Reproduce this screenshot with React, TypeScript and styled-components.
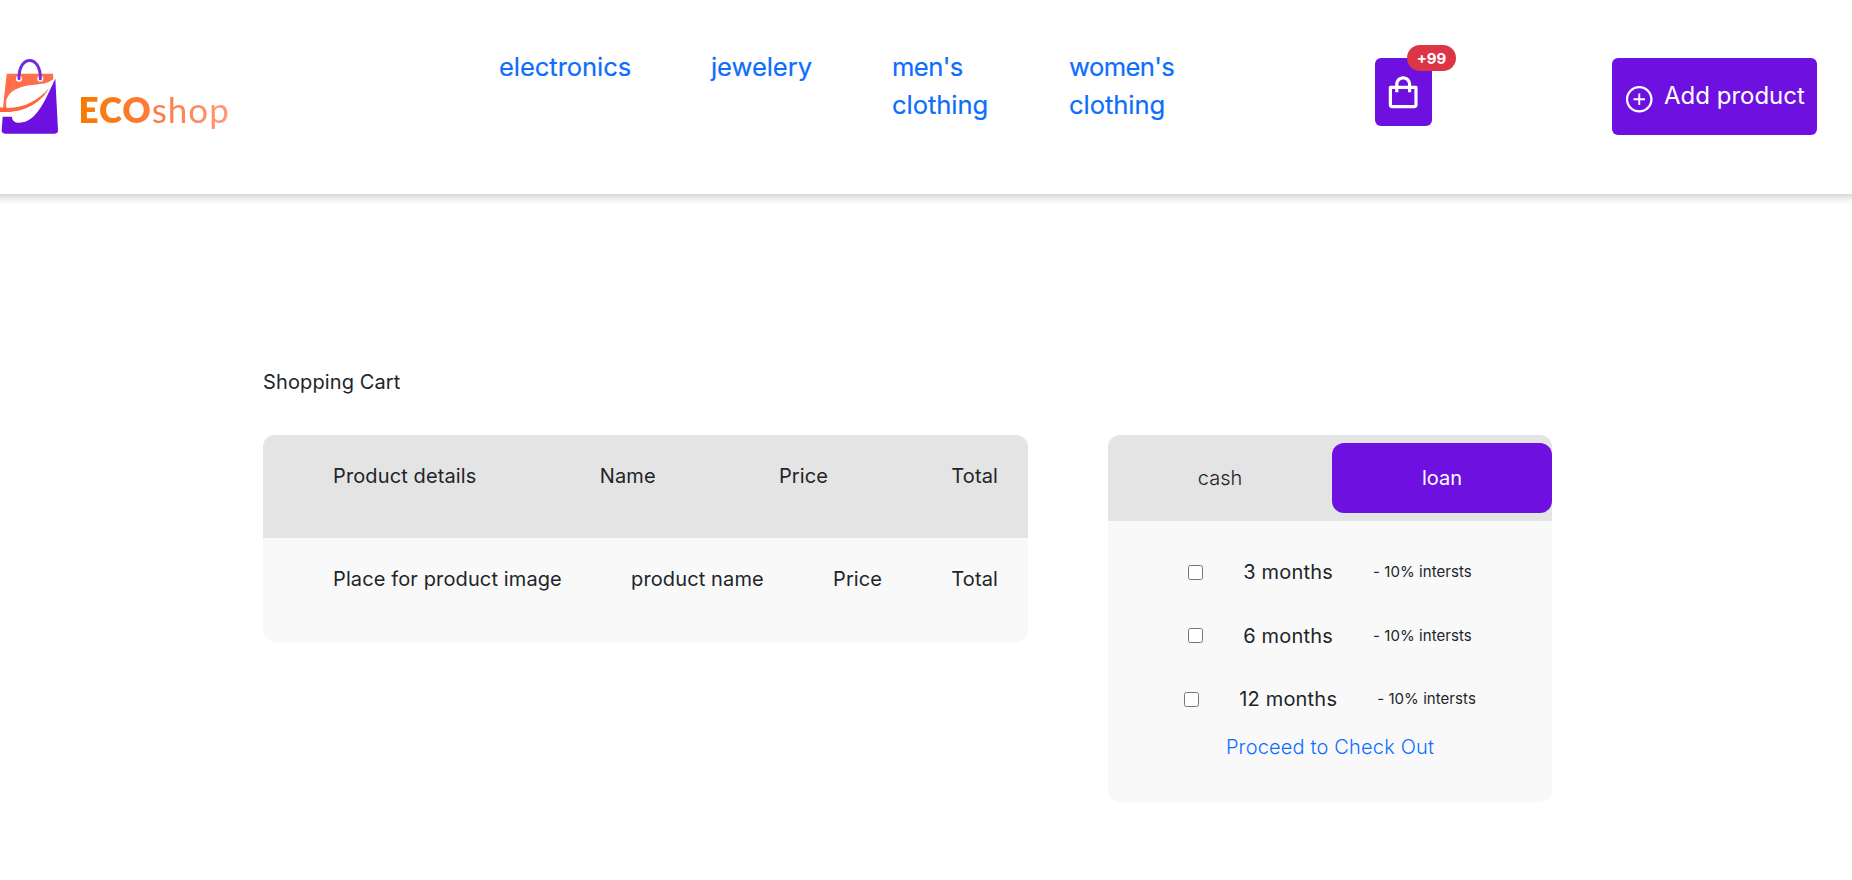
import React from "react";
import styled, { createGlobalStyle } from "styled-components";
import { BiShoppingBag } from "react-icons/bi";
import { AiOutlinePlusCircle } from "react-icons/ai";

const purple = "#6e11e0";

const GlobalStyle = createGlobalStyle`
  * { box-sizing: border-box; }
  body {
    margin: 0;
    background: #fff;
    color: #212529;
    font-family: Inter, "Liberation Sans", sans-serif;
    font-size: 20px;
    line-height: 30px;
    letter-spacing: 0.12px;
    overflow-x: hidden;
  }
  p { margin: 0; }
  a { color: #0d6efd; text-decoration: none; }
`;

const Header = styled.header`
  display: flex;
  align-items: flex-start;
  height: 194px;
  box-shadow: 0 -5px 8px 8px rgba(0, 0, 0, 0.2);
`;

const Logo = styled.div`
  display: flex;
  width: 499px;
  padding-top: 56px;
`;

const LogoMark = styled.svg`
  width: 60px;
  height: 80px;
`;

const LogoText = styled.div`
  margin: 31px 0 0 18.5px;
  height: 44px;
  font-family: Lato, sans-serif;
  font-size: 35px;
  line-height: 44px;
  letter-spacing: 0.95px;
  color: transparent;
  background: linear-gradient(90deg, #f57c00, #ff7a45 55%, #ff9a7c);
  background-clip: text;
  -webkit-background-clip: text;

  b { font-weight: 800; }
`;

const Categories = styled.nav`
  display: flex;
  gap: 80px;
  width: 876px;
  padding-top: 48px;
`;

const Category = styled.a<{ $width: number; $tracking?: number }>`
  width: ${(p) => p.$width}px;
  font-size: 25.6px;
  line-height: 38.4px;
  letter-spacing: -0.08px;
  -webkit-text-stroke: 0.2px currentColor;

  span { letter-spacing: ${(p) => p.$tracking ?? -0.08}px; }
`;

const CartButton = styled.button`
  position: relative;
  display: flex;
  align-items: center;
  justify-content: center;
  width: 57px;
  height: 68px;
  margin: 58px 180px 0 0;
  padding: 0;
  border: 0;
  border-radius: 6px;
  background: ${purple};
  color: #fff;
  font-size: 38.4px;
`;

const Badge = styled.span`
  position: absolute;
  top: -13px;
  left: 32px;
  width: 49px;
  height: 26px;
  border-radius: 13px;
  background: #dc3545;
  font: 700 15px/27px Inter, sans-serif;
  text-align: center;
`;

const AddButton = styled.button`
  display: flex;
  align-items: center;
  gap: 10px;
  width: 205px;
  height: 77px;
  margin-top: 58px;
  padding: 0 0 2px 11.5px;
  border: 0;
  border-radius: 6px;
  background: ${purple};
  color: #fff;
  font: 400 24px/36px Inter, sans-serif;
  white-space: nowrap;

  svg { flex: none; width: 30.5px; height: 30.5px; margin-top: 7px; }
`;

const Page = styled.main`
  padding: 173px 300px 0 263px;
`;

const Title = styled.p`
  height: 68px;
`;

const Columns = styled.div`
  display: flex;
  align-items: flex-start;
  gap: 80px;
`;

const Card = styled.section<{ $width: number; $height: number }>`
  width: ${(p) => p.$width}px;
  height: ${(p) => p.$height}px;
  border-radius: 12px;
  background: #f9f9f9;
  overflow: hidden;
`;

const TableRow = styled.div<{ $head?: boolean }>`
  display: flex;
  justify-content: space-between;
  height: ${(p) => (p.$head ? 103 : 104)}px;
  padding: 26px 30px 0 70px;
  background: ${(p) => (p.$head ? "#e4e4e4" : "transparent")};
`;

const Tabs = styled.div`
  display: grid;
  grid-template-columns: 224px 220px;
  align-items: center;
  height: 86px;
  background: #e4e4e4;
`;

const Tab = styled.button<{ $active?: boolean }>`
  height: 70px;
  padding: 0;
  border: 0;
  border-radius: 12px;
  background: ${(p) => (p.$active ? purple : "transparent")};
  color: ${(p) => (p.$active ? "#fff" : "#212529")};
  font: ${(p) => (p.$active ? 400 : 300)} 20px/30px Inter, sans-serif;
`;

const Plans = styled.div`
  display: flex;
  flex-direction: column;
  align-items: center;
  padding-top: 36px;
`;

const Plan = styled.label`
  display: flex;
  align-items: center;
  gap: 40px;
  height: 30px;
  margin-bottom: 33.7px;
  letter-spacing: 0.2px;

  &:last-of-type { margin-bottom: 18px; }
`;

const Check = styled.input`
  width: 15px;
  height: 15px;
  margin: 0;
`;

const Note = styled.small`
  font-size: 15px;
  letter-spacing: 0.06px;
`;

const Checkout = styled.a`
  font-weight: 300;
  letter-spacing: 0.17px;
`;

const plans = ["3 months", "6 months", "12 months"];

export default function App() {
  return (
    <>
      <GlobalStyle />
      <Header>
        <Logo>
          <LogoMark viewBox="0 48 180 240">
            <path d="M20 101H159L160 118L90 160L20 212L9 204Z" fill="#ff6f4a" />
            <path d="M166 116L174 271Q174 281 164 281H15Q5 281 5 271L8 230H36L110 165Z" fill={purple} />
            <path d="M168 111C145 141 98 127 57 144C25 154 12 180 21 208L36 230C36 246 50 250 68 247C112 240 139 174 168 111Z" fill="#fff" />
            <path d="M0 202C58 211 110 187 147 144C124 190 70 216 20 216H0Z" fill="#ff6640" />
            <circle cx="57" cy="116" r="9" fill="#fff" />
            <circle cx="121" cy="116" r="9" fill="#fff" />
            <path d="M57 116C55 43 123 43 121 116" fill="none" stroke="#722be2" strokeWidth="9" strokeLinecap="round" />
          </LogoMark>
          <LogoText><b>ECO</b>shop</LogoText>
        </Logo>
        <Categories>
          <Category $width={132}>electronics</Category>
          <Category $width={101}>jewelery</Category>
          <Category $width={97} $tracking={-0.6}><span>men's</span> clothing</Category>
          <Category $width={110} $tracking={-0.6}><span>women's</span> clothing</Category>
        </Categories>
        <CartButton>
          <BiShoppingBag />
          <Badge>+99</Badge>
        </CartButton>
        <AddButton>
          <AiOutlinePlusCircle />
          Add product
        </AddButton>
      </Header>
      <Page>
        <Title>Shopping Cart</Title>
        <Columns>
          <Card $width={765} $height={207}>
            <TableRow $head>
              <p>Product details</p>
              <p>Name</p>
              <p>Price</p>
              <p>Total</p>
            </TableRow>
            <TableRow>
              <p>Place for product image</p>
              <p>product name</p>
              <p>Price</p>
              <p>Total</p>
            </TableRow>
          </Card>
          <Card $width={444} $height={367}>
            <Tabs>
              <Tab>cash</Tab>
              <Tab $active>loan</Tab>
            </Tabs>
            <Plans>
              {plans.map((plan) => (
                <Plan key={plan}>
                  <Check type="checkbox" />
                  <span>{plan}</span>
                  <Note>- 10% intersts</Note>
                </Plan>
              ))}
              <Checkout>Proceed to Check Out</Checkout>
            </Plans>
          </Card>
        </Columns>
      </Page>
    </>
  );
}
